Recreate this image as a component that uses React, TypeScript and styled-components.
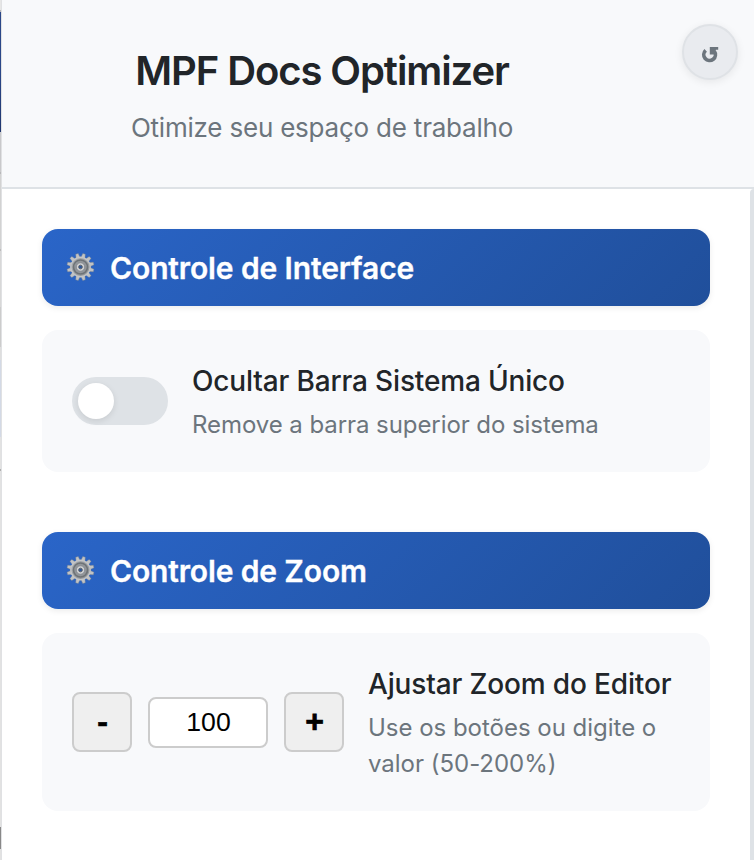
import React from "react";
import styled, { createGlobalStyle } from "styled-components";

const Global = createGlobalStyle`
  *, *::before, *::after { box-sizing: border-box; }
  html, body { margin: 0; padding: 0; overflow: hidden; }
  body { font-family: Inter, "Liberation Sans", sans-serif; background: #fff; -webkit-font-smoothing: antialiased; }
  h1, h2, p { margin: 0; }
`;

const Page = styled.div`
  display: grid;
  grid-template-columns: 1px 753px;
  width: 754px;
  height: 860px;
  overflow: hidden;
`;

const PageEdge = styled.div`
  background: linear-gradient(
    #e6e6e6 0 10px, #b5b5ba 10px 12px, #2b4788 12px 72px, #20376f 132px,
    #c9c9cb 132px 172px, #b8b8ba 172px 174px, #d2d2d2 174px 249px, #bcbcbc 249px 251px,
    #d8d8d8 251px 307px, #cccccc 307px 347px, #dedede 347px 360px, #d3d9e5 360px 437px,
    #e2e2e2 437px 469px, #b0b0b0 469px 471px, #e2e2e2 471px 827px, #888888 827px 849px, #e2e2e2 849px
  );
`;

const Popup = styled.main`
  display: flex;
  flex-direction: column;
  border-left: 1px solid #e0e1e3;
  background: #fff;
  min-width: 0;
`;

const Header = styled.header`
  display: grid;
  grid-template-columns: 640px 56px;
  column-gap: 40px;
  height: 189px;
  flex: none;
  padding: 24px 16px 0 0;
  background: #f8f9fb;
  border-bottom: 2px solid #dee2e6;
`;

const Heading = styled.div`
  padding-top: 20px;
  text-align: center;
`;

const Title = styled.h1`
  font-size: 40px;
  line-height: 54px;
  font-weight: 600;
  letter-spacing: -1.08px;
  color: #212529;
`;

const Subtitle = styled.p`
  margin-top: 12px;
  font-size: 26px;
  line-height: 36px;
  letter-spacing: -0.21px;
  color: #6c757d;
`;

const ResetButton = styled.button`
  display: flex;
  align-items: center;
  justify-content: center;
  width: 56px;
  height: 56px;
  padding: 4px 0 0;
  border: 2px solid #dfe2e6;
  border-radius: 50%;
  background: #e9ebef;
  box-shadow: 0 2px 8px rgba(0, 0, 0, 0.08);
`;

const Body = styled.div`
  display: grid;
  grid-template-columns: 668px 4px;
  column-gap: 40px;
  flex: 1;
  padding-left: 40px;
`;

const Sections = styled.div`
  display: flex;
  flex-direction: column;
  gap: 60px;
  padding-top: 40px;
`;

const ScrollThumb = styled.div`
  border-radius: 4px 0 0 0;
  background: #dee2e6;
`;

const Section = styled.section`
  display: flex;
  flex-direction: column;
  gap: 24px;
`;

const SectionHeader = styled.div`
  display: flex;
  align-items: center;
  gap: 14px;
  height: 77px;
  padding: 0 23px;
  border-radius: 16px;
  background: linear-gradient(135deg, #2a65c8 0%, #204f9b 100%);
  box-shadow: 0 2px 6px rgba(0, 0, 0, 0.08);

  svg {
    margin-bottom: 2px;
  }
`;

const SectionTitle = styled.h2<{ $track: number }>`
  font-size: 30px;
  line-height: 40px;
  font-weight: 600;
  letter-spacing: ${(p) => p.$track}px;
  color: #fff;
  -webkit-text-stroke: 0.3px #fff;
`;

const Card = styled.div<{ $tall?: boolean }>`
  display: flex;
  align-items: center;
  gap: 24px;
  height: ${(p) => (p.$tall ? 178 : 142)}px;
  padding: 0 30px;
  border-radius: 16px;
  background: #f8f9fb;
`;

const Toggle = styled.button`
  display: flex;
  align-items: center;
  flex: none;
  width: 96px;
  height: 48px;
  padding: 0 6px;
  border: 0;
  border-radius: 24px;
  background: #dee2e6;
`;

const Knob = styled.span`
  width: 36px;
  height: 36px;
  border-radius: 50%;
  background: #fff;
  box-shadow: 0 2px 6px rgba(0, 0, 0, 0.1);
`;

const Copy = styled.div`
  display: flex;
  flex-direction: column;
  gap: 7px;
  padding-top: 3px;
`;

const Label = styled.div<{ $track: number }>`
  font-size: 28px;
  line-height: 38px;
  font-weight: 500;
  letter-spacing: ${(p) => p.$track}px;
  color: #212529;
  white-space: nowrap;
`;

const Description = styled.div<{ $track: number }>`
  font-size: 24px;
  line-height: 36px;
  letter-spacing: ${(p) => p.$track}px;
  color: #6c757d;
  white-space: nowrap;
`;

const Stepper = styled.div`
  display: flex;
  align-items: center;
  gap: 16px;
  flex: none;
`;

const StepButton = styled.button`
  width: 60px;
  height: 60px;
  padding: 0 0 2px 1px;
  border: 2px solid #ccc;
  border-radius: 8px;
  background: #efefef;
  color: #000;
  font: bold 32px "Liberation Sans", Arial, sans-serif;
  -webkit-text-stroke: 0.7px #000;
`;

const ZoomInput = styled.input`
  width: 120px;
  height: 51px;
  padding: 0 0 0 1px;
  border: 2px solid #ccc;
  border-radius: 8px;
  background: #fff;
  color: #000;
  text-align: center;
  font: 26.67px "Liberation Sans", Arial, sans-serif;
`;

const teeth = Array.from({ length: 12 }, (_, i) => i * 30);

const Gear = () => (
  <svg width="31" height="30" viewBox="-15.5 -15 31 30" aria-hidden="true">
    <defs>
      <linearGradient id="gearMetal" x1="0" y1="0" x2="1" y2="1">
        <stop offset="0" stopColor="#a9adb0" />
        <stop offset="1" stopColor="#8d9195" />
      </linearGradient>
    </defs>
    {teeth.map((a) => (
      <path key={a} d="M-2 -9.5L-1.3 -13.6H1.3L2 -9.5Z" transform={`rotate(${a + 15})`} fill="#c1c3c5" stroke="#7d838a" strokeWidth="0.4" />
    ))}
    <circle r="9.7" fill="url(#gearMetal)" stroke="#c4c5c6" strokeWidth="1.4" />
    <circle r="7" fill="#92969a" stroke="#6e7377" strokeWidth="1.6" />
    <circle r="4.2" fill="#cfd1d3" stroke="#777b80" strokeWidth="0.6" />
    <circle r="1.8" fill="#2b57a0" stroke="#5c6269" strokeWidth="1" />
  </svg>
);

const ResetIcon = () => (
  <svg width="18" height="18" viewBox="0 0 18 18" overflow="visible" aria-hidden="true">
    <path d="M4.7 5.4A5.8 5.8 0 1 0 13.2 6.2" fill="none" stroke="#6c757d" strokeWidth="3.7" />
    <path d="M8.8 2H17.2V4.7H15L13.4 6.6V9.6H8.8Z" fill="#6c757d" />
  </svg>
);

export default function App() {
  return (
    <>
      <Global />
      <Page>
        <PageEdge />
        <Popup>
          <Header>
            <Heading>
              <Title>MPF Docs Optimizer</Title>
              <Subtitle>Otimize seu espaço de trabalho</Subtitle>
            </Heading>
            <ResetButton aria-label="Restaurar">
              <ResetIcon />
            </ResetButton>
          </Header>
          <Body>
            <Sections>
              <Section>
                <SectionHeader>
                  <Gear />
                  <SectionTitle $track={-0.12}>Controle de Interface</SectionTitle>
                </SectionHeader>
                <Card>
                  <Toggle role="switch" aria-checked="false">
                    <Knob />
                  </Toggle>
                  <Copy>
                    <Label $track={-0.16}>Ocultar Barra Sistema Único</Label>
                    <Description $track={-0.07}>Remove a barra superior do sistema</Description>
                  </Copy>
                </Card>
              </Section>
              <Section>
                <SectionHeader>
                  <Gear />
                  <SectionTitle $track={-0.14}>Controle de Zoom</SectionTitle>
                </SectionHeader>
                <Card $tall>
                  <Stepper>
                    <StepButton>-</StepButton>
                    <ZoomInput defaultValue="100" />
                    <StepButton>+</StepButton>
                  </Stepper>
                  <Copy>
                    <Label $track={-0.15}>Ajustar Zoom do Editor</Label>
                    <Description $track={-0.02}>
                      Use os botões ou digite o<br />
                      valor (50-200%)
                    </Description>
                  </Copy>
                </Card>
              </Section>
            </Sections>
            <ScrollThumb />
          </Body>
        </Popup>
      </Page>
    </>
  );
}
